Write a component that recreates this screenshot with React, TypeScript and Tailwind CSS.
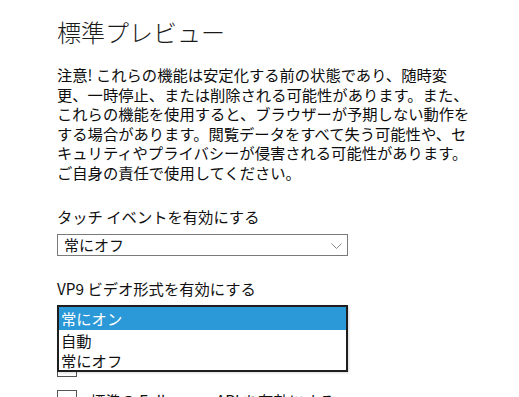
import React from "react";

const font = { fontFamily: '"Noto Sans CJK JP", "Noto Sans", sans-serif' };

function Chevron() {
  return (
    <svg width="11" height="6" viewBox="0 0 11 6" className="absolute right-[5px] top-[8px]">
      <path d="M0.5 0.5 L5.5 5.5 L10.5 0.5" fill="none" stroke="#8a8a8a" strokeWidth="1" />
    </svg>
  );
}

function Select({ value }: { value: string }) {
  return (
    <div className="relative w-[291px] h-[22px] border border-[#7a7a7a] bg-white pl-[6px] text-[15px] leading-[20px] text-[#111]">
      {value}
      <Chevron />
    </div>
  );
}

export default function App() {
  return (
    <div
      className="relative w-[519px] h-[397px] overflow-hidden bg-white pl-[57px] text-black"
      style={font}
    >
      <h1 className="pt-[16px] text-[24px] leading-[32px] font-light text-[#1a1a1a]">
        標準プレビュー
      </h1>
      <p className="mt-[17px] text-[15.3px] leading-[19.5px] text-[#0d0d0d] whitespace-nowrap">
        注意! これらの機能は安定化する前の状態であり、随時変
        <br />
        更、一時停止、または削除される可能性があります。また、
        <br />
        これらの機能を使用すると、ブラウザーが予期しない動作を
        <br />
        する場合があります。閲覧データをすべて失う可能性や、セ
        <br />
        キュリティやプライバシーが侵害される可能性があります。
        <br />
        ご自身の責任で使用してください。
      </p>
      <div className="mt-[24px] text-[15.3px] leading-[20px] text-[#111]">タッチ イベントを有効にする</div>
      <div className="mt-[8px]">
        <Select value="常にオフ" />
      </div>
      <div className="mt-[22px] text-[15.3px] leading-[20px] text-[#111]">VP9 ビデオ形式を有効にする</div>
      <div className="mt-[7px]">
        <Select value="常にオン" />
      </div>
      <div className="mt-[30px] flex flex-col gap-[13px]">
        <div className="flex items-start gap-[13px] h-[20px]">
          <div className="w-[20px] h-[20px] border border-[#555] bg-white shrink-0" />
          <span className="text-[15.3px] leading-[9px] text-[#111]">Flash を既定でブロックする</span>
        </div>
        <div className="flex items-center gap-[13px] h-[20px]">
          <div className="w-[20px] h-[20px] border border-[#555] bg-white shrink-0" />
          <span className="text-[15.3px] leading-[20px] text-[#111]">標準の Fullscreen API を有効にする</span>
        </div>
      </div>

      <div className="absolute left-[57px] top-[305px] w-[291px] h-[67px] border-2 border-[#1e1e1e] bg-white text-[15.3px] text-[#111] shadow-[1px_1px_2px_rgba(0,0,0,0.15)]">
        <div className="h-[23px] bg-[#2b98d8] text-white pl-[2px] leading-[22px]">常にオン</div>
        <div className="h-[20px] pl-[2px] leading-[20px]">自動</div>
        <div className="h-[20px] pl-[2px] leading-[20px]">常にオフ</div>
      </div>
    </div>
  );
}
